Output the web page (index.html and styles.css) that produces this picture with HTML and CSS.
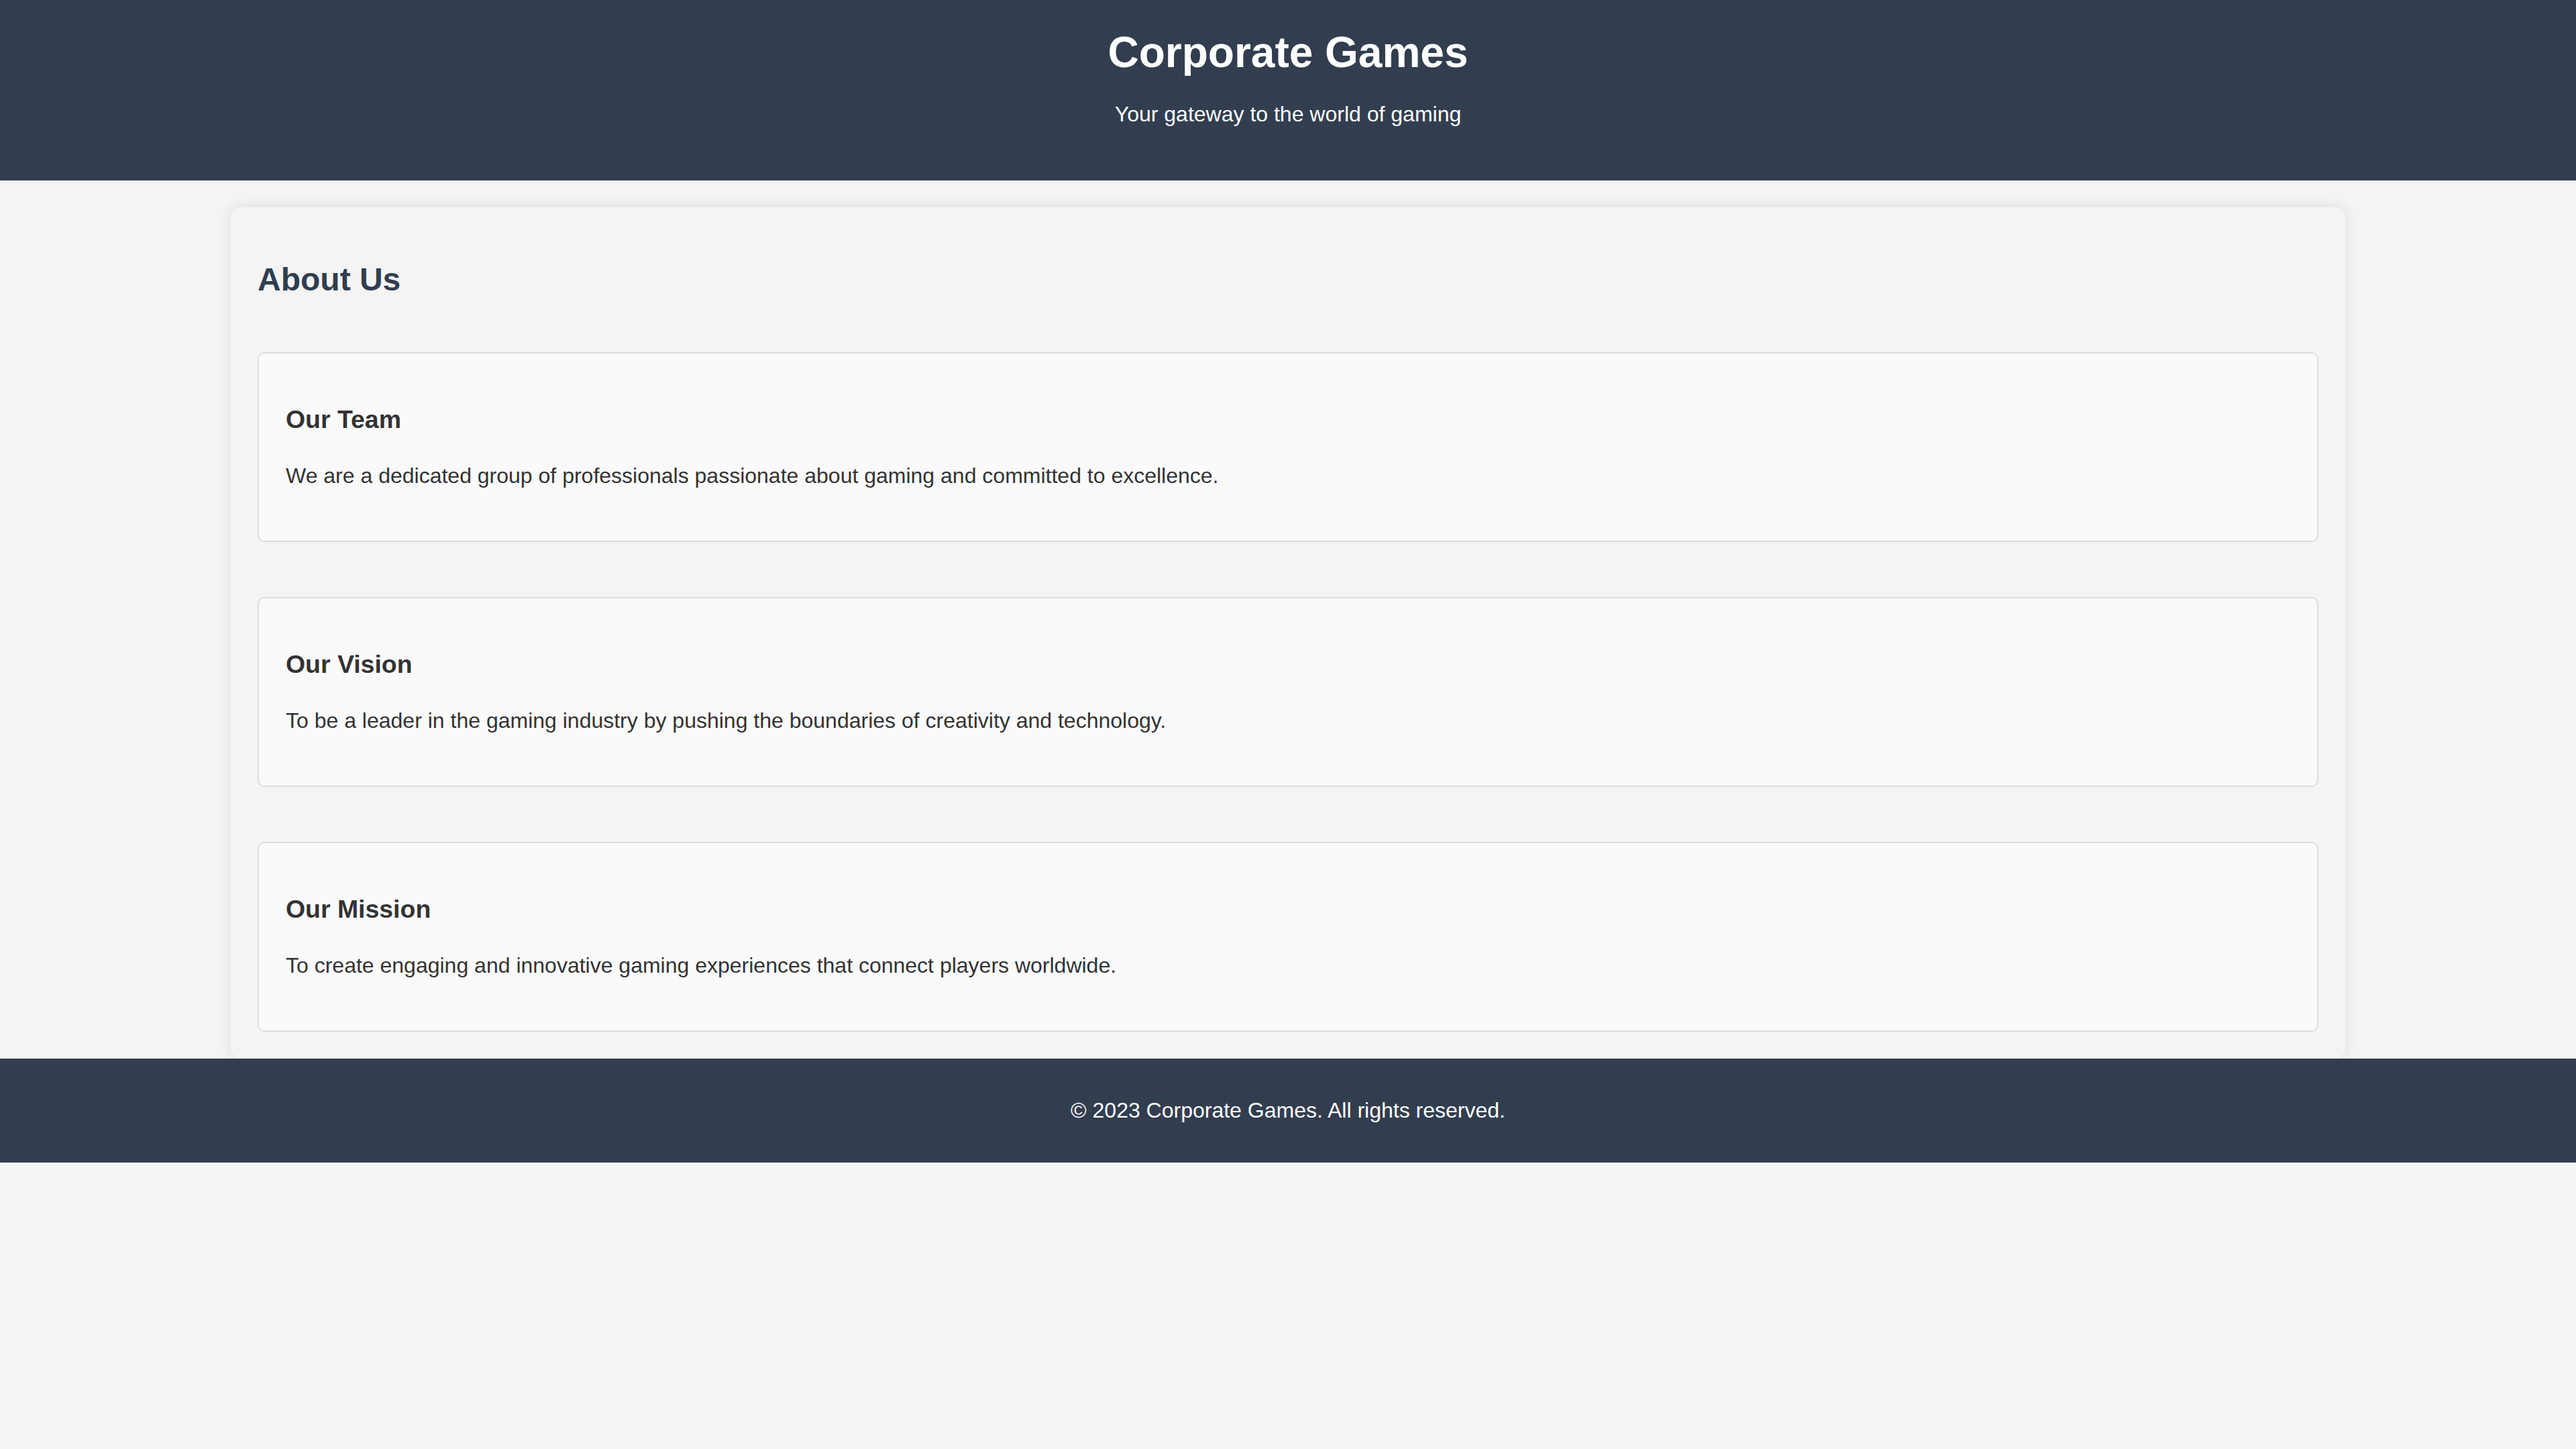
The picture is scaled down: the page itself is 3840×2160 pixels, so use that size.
FILE: index.html
```html
<!DOCTYPE html>
<html lang="en">
<head>
<meta charset="utf-8">
<title>Corporate Games - About Us</title>
<link rel="stylesheet" href="styles.css">
</head>
<body>
<header class="site-header">
  <h1 class="site-title">Corporate Games</h1>
  <p class="site-tagline">Your gateway to the world of gaming</p>
</header>
<main class="container">
  <h2 class="section-title">About Us</h2>
  <div class="cards">
    <section class="card">
      <h3 class="card-title">Our Team</h3>
      <p class="card-text">We are a dedicated group of professionals passionate about gaming and committed to excellence.</p>
    </section>
    <section class="card">
      <h3 class="card-title">Our Vision</h3>
      <p class="card-text">To be a leader in the gaming industry by pushing the boundaries of creativity and technology.</p>
    </section>
    <section class="card">
      <h3 class="card-title">Our Mission</h3>
      <p class="card-text">To create engaging and innovative gaming experiences that connect players worldwide.</p>
    </section>
  </div>
</main>
<footer class="site-footer">
  <p class="footer-text">&copy; 2023 Corporate Games. All rights reserved.</p>
</footer>
</body>
</html>
```
FILE: styles.css
```css
html, body {
  margin: 0;
  padding: 0;
}
body {
  background: #f4f4f4;
  color: #333333;
  font-family: "Liberation Sans", Arial, Helvetica, sans-serif;
  font-size: 32px;
  line-height: 51px;
}

.site-header {
  background: #323e4f;
  color: #ffffff;
  text-align: center;
  padding: 40px 0;
}
.site-title {
  margin: 0;
  font-size: 64px;
  line-height: 76px;
  font-weight: bold;
}
.site-tagline {
  margin: 29px 0 33px;
  font-size: 32px;
  line-height: 51px;
}

.container {
  width: 80%;
  margin: 40px auto 0;
  padding: 40px;
  background: #f4f4f4;
  border-radius: 16px;
  box-shadow: 0 0 20px rgba(0, 0, 0, 0.1);
}
.section-title {
  margin: 40px 0 81px;
  font-size: 48px;
  line-height: 55px;
  font-weight: bold;
  color: #2f3e50;
}
.cards {
  display: flex;
  flex-direction: column;
  gap: 82px;
}
.card {
  background: #fafafa;
  border: 2px solid #dddddd;
  border-radius: 10px;
  padding: 40px;
}
.card-title {
  margin: 37px 0;
  font-size: 37.44px;
  line-height: 43px;
  font-weight: bold;
  color: #333333;
}
.card-text {
  margin: 37px 0 31px;
  font-size: 32px;
  line-height: 51px;
  color: #333333;
}

.site-footer {
  background: #323e4f;
  color: #ffffff;
  text-align: center;
  padding: 20px 0;
}
.footer-text {
  margin: 32px 0;
  font-size: 32px;
  line-height: 51px;
}
```
